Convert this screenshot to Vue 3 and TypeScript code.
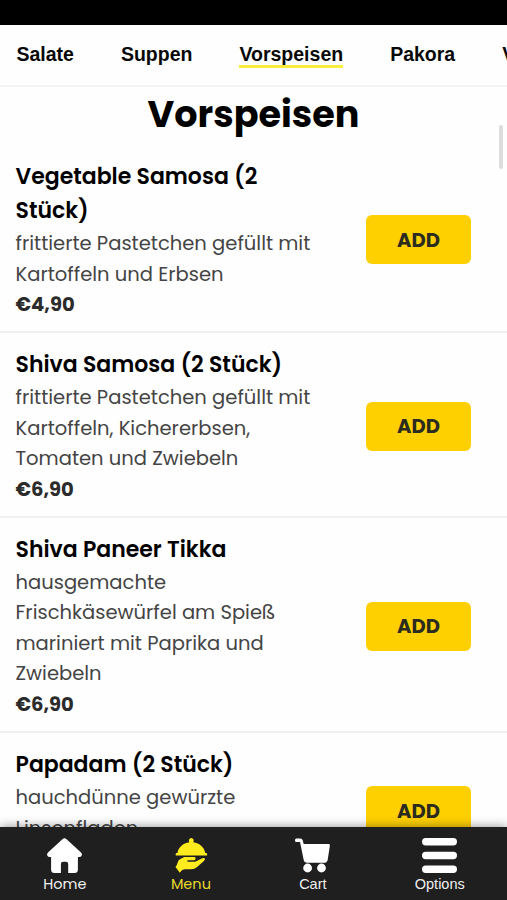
<script setup lang="ts">
interface Dish {
  title: string
  description: string
  price: string
}

const categories = ['Salate', 'Suppen', 'Vorspeisen', 'Pakora', 'Vegetarisch']
const active = 'Vorspeisen'

const dishes: Dish[] = [
  {
    title: 'Vegetable Samosa (2 Stück)',
    description: 'frittierte Pastetchen gefüllt mit Kartoffeln und Erbsen',
    price: '€4,90',
  },
  {
    title: 'Shiva Samosa (2 Stück)',
    description: 'frittierte Pastetchen gefüllt mit Kartoffeln, Kichererbsen, Tomaten und Zwiebeln',
    price: '€6,90',
  },
  {
    title: 'Shiva Paneer Tikka',
    description: 'hausgemachte Frischkäsewürfel am Spieß mariniert mit Paprika und Zwiebeln',
    price: '€6,90',
  },
  {
    title: 'Papadam (2 Stück)',
    description: 'hauchdünne gewürzte Linsenfladen',
    price: '€1,90',
  },
]
</script>

<template>
  <div class="screen">
    <div class="status"></div>
    <nav class="categories">
      <a v-for="name in categories" :key="name" class="category" :class="{ current: name === active }">{{ name }}</a>
    </nav>

    <main class="content">
      <h1 class="heading">Vorspeisen</h1>
      <article v-for="dish in dishes" :key="dish.title" class="dish">
        <div class="info">
          <h2 class="title">{{ dish.title }}</h2>
          <div class="description">{{ dish.description }}</div>
          <div class="price">{{ dish.price }}</div>
        </div>
        <button class="add">ADD</button>
      </article>
    </main>
    <div class="scrollbar"></div>

    <footer class="tabs">
      <a class="tab">
        <svg class="icon" viewBox="0 0 35 35">
          <path d="M15.400 1.200Q17.500-.6 19.600 1.200L34 14.600Q35.400 16 34.600 17.800Q34 19 32 19H30.900V31.500Q30.900 35 27.500 35H21.200V26Q21.200 23.700 19 23.700H16Q13.900 23.700 13.900 26V35H7.500Q4.100 35 4.100 31.500V19H3Q1 19 .4 17.800Q-.4 16 1 14.600Z" />
        </svg>
        <span class="label">Home</span>
      </a>
      <a class="tab chosen">
        <svg class="icon" viewBox="-.8 0 35 35">
          <path d="M17.500 0A2.700 2.700 0 0 1 19.400 4.300C26 5.200 30.700 9.500 31.400 15H32.500Q33.300 15 33.300 16V17.600H1.900V16Q1.900 15 2.700 15H3.700C4.400 9.500 9.100 5.200 15.600 4.300A2.700 2.700 0 0 1 17.500 0Z" />
          <path d="M10.500 19.100H20.400Q21.900 19.200 21.900 20.600Q21.900 22 20.400 22.200H14.300Q13.400 22.300 13.400 23Q13.500 23.700 14.300 23.700H20.900Q22.800 23.500 24.400 22.200L28.600 20.300Q30.400 19.500 31.100 20.600Q31.600 21.600 30.100 22.900L23.300 28.900Q20.900 31.200 17 31.200H10.900Q8.800 31.300 7.600 32.800L6 34.800L1.700 28.900Q3.300 27.200 3.900 24.500Q4.500 22.400 6.200 21.300Z" />
        </svg>
        <span class="label">Menu</span>
      </a>
      <a class="tab">
        <svg class="icon" viewBox="0 0 35 35">
          <path d="M1.200 .6H5.500Q7.200 .6 7.700 2.300L8.700 6H33.700Q35 6 34.900 7.400L32.700 21.700Q32.200 24.800 29 24.800H12Q9.300 24.800 8.700 22L5 4.100H1.200Q0 4 0 2.400Q0 .7 1.200 .6Z" />
          <circle cx="12.600" cy="30" r="4.400" />
          <circle cx="26.500" cy="30" r="4.400" />
        </svg>
        <span class="label plain">Cart</span>
      </a>
      <a class="tab">
        <svg class="icon" viewBox="0 0 35 35">
          <rect y="0" width="35" height="7.400" rx="3.700" />
          <rect y="13.800" width="35" height="7.400" rx="3.700" />
          <rect y="27.500" width="35" height="7.400" rx="3.700" />
        </svg>
        <span class="label plain">Options</span>
      </a>
    </footer>
  </div>
</template>

<style>
body {
  background: #fefefe;
}
</style>

<style scoped>
.screen {
  position: relative;
  display: flex;
  flex-direction: column;
  height: 900px;
  overflow: hidden;
  background: #fefefe;
  font-family: Poppins, Inter, sans-serif;
}
.status {
  flex: none;
  height: 25px;
  background: #000;
}
.categories {
  flex: none;
  display: flex;
  align-items: flex-start;
  gap: 47px;
  box-sizing: border-box;
  height: 62px;
  padding: 18px 0 0 16.500px;
  border-bottom: 2px solid #f3f3f3;
  overflow: hidden;
  font-family: 'Liberation Sans', Arial, sans-serif;
  font-size: 19.500px;
  font-weight: 700;
  line-height: 22px;
  color: #080808;
}
.category {
  flex: none;
  border-bottom: 3px solid transparent;
}
.category.current {
  border-color: #fcec3c;
}
.content {
  flex: 1;
  min-height: 0;
  overflow: hidden;
}
.heading {
  margin: 0;
  height: 58px;
  font-size: 36.600px;
  font-weight: 700;
  line-height: 56px;
  text-align: center;
  color: #000;
}
.dish {
  display: flex;
  align-items: center;
  justify-content: space-between;
  padding: 14.700px 36px 11.600px 15.500px;
  border-bottom: 2px solid #f0f0f0;
}
.info {
  width: 303px;
}
.title {
  width: 275px;
  margin: 0;
  font-size: 22px;
  font-weight: 600;
  line-height: 34.300px;
  color: #000;
}
.description {
  font-size: 19.550px;
  font-weight: 400;
  line-height: 30.500px;
  color: #444;
}
.price {
  font-size: 19.550px;
  font-weight: 700;
  line-height: 30.500px;
  color: #2b2b2b;
}
.add {
  flex: none;
  width: 105px;
  height: 49px;
  padding: 0;
  border: 0;
  border-radius: 6px;
  background: #ffd000;
  font: inherit;
  font-size: 19.550px;
  font-weight: 700;
  color: #2b2b20;
}
.scrollbar {
  position: absolute;
  top: 125px;
  right: 4px;
  width: 4px;
  height: 44px;
  border-radius: 2px;
  background: #dcdcdc;
}
.tabs {
  position: relative;
  flex: none;
  display: flex;
  justify-content: space-around;
  box-sizing: border-box;
  height: 73px;
  padding: 10.500px 0 0 1px;
  background: #1f1f1f;
  box-shadow: 0 0 10px rgba(0, 0, 0, 0.45);
  color: #f0f0f0;
}
.tab {
  display: flex;
  flex-direction: column;
  align-items: center;
}
.icon {
  width: 35px;
  height: 35px;
  fill: #fff;
}
.label {
  margin-top: 1px;
  font-size: 14.500px;
  line-height: 20px;
}
.plain {
  font-family: 'Liberation Sans', Arial, sans-serif;
}
.chosen {
  color: #e5d92e;
}
.chosen .icon {
  fill: #ffec1f;
}
</style>
